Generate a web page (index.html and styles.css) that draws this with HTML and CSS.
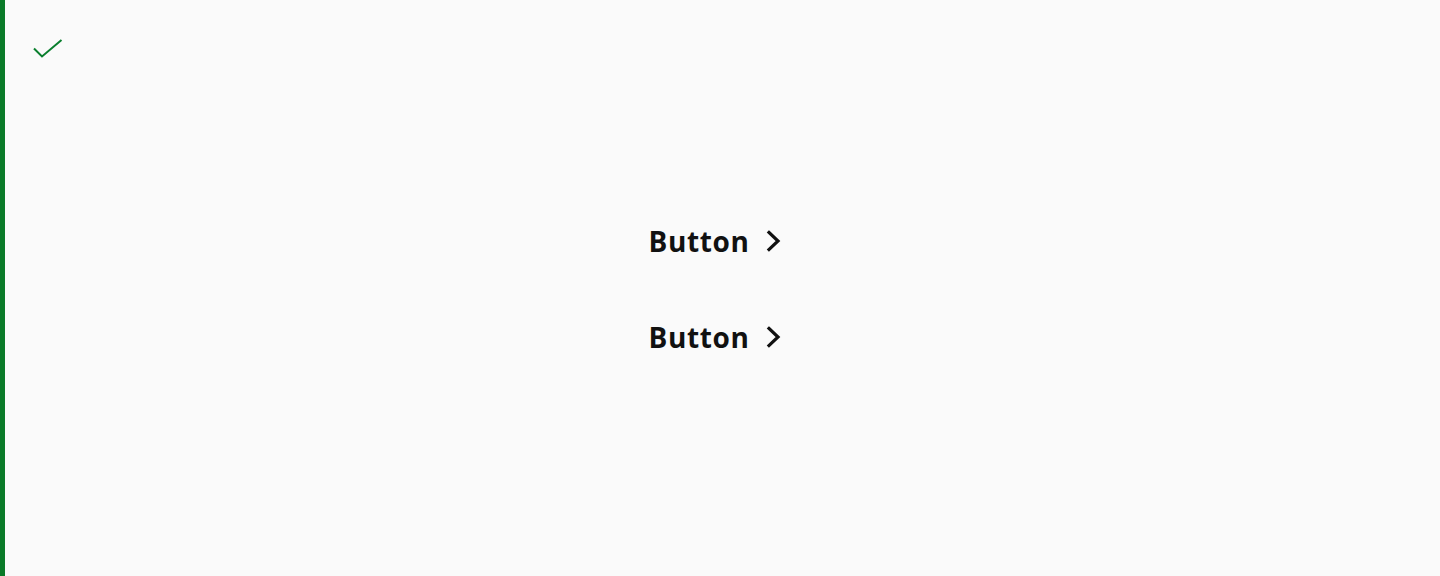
FILE: index.html
```html
<!DOCTYPE html>
<html lang="en">
<head>
<meta charset="utf-8">
<title>Buttons</title>
<link rel="stylesheet" href="styles.css">
</head>
<body>
<div class="frame">
  <div class="status">
    <svg class="check" width="30" height="20" viewBox="0 0 30 20" aria-hidden="true">
      <polyline points="1,9.5 9,17.5 28.5,1" fill="none" stroke="#0a7f2e" stroke-width="2"/>
    </svg>
  </div>
  <div class="stack">
    <button class="link-btn" type="button">
      <span class="label">Button</span>
      <svg class="chev" width="16" height="22" viewBox="0 0 16 22" aria-hidden="true">
        <polyline points="3,2.5 12,11 3,19.5" fill="none" stroke="#111" stroke-width="3.2" stroke-linecap="square"/>
      </svg>
    </button>
    <button class="link-btn" type="button">
      <span class="label">Button</span>
      <svg class="chev" width="16" height="22" viewBox="0 0 16 22" aria-hidden="true">
        <polyline points="3,2.5 12,11 3,19.5" fill="none" stroke="#111" stroke-width="3.2" stroke-linecap="square"/>
      </svg>
    </button>
  </div>
</div>
</body>
</html>
```

FILE: styles.css
```css
* { box-sizing: border-box; }
html, body {
  margin: 0;
  padding: 0;
  background: #fafafa;
}
.frame {
  height: 576px;
  border-left: 5px solid #0a7a28;
  display: flex;
  flex-direction: column;
  padding: 39px 0 0 28px;
}
.status {
  height: 20px;
  display: flex;
  align-items: flex-start;
}
.check { display: block; }
.stack {
  display: flex;
  flex-direction: column;
  align-items: center;
  gap: 56px;
  margin-top: 162px;
  margin-left: -28px;
  padding-right: 14px;
}
.link-btn {
  display: flex;
  align-items: center;
  gap: 17px;
  background: none;
  border: 0;
  padding: 0;
  height: 40px;
  font-family: "Open Sans", "Noto Sans", sans-serif;
  font-weight: 700;
  font-size: 28px;
  letter-spacing: 0.6px;
  color: #111;
  cursor: pointer;
}
.chev { display: block; }
```
